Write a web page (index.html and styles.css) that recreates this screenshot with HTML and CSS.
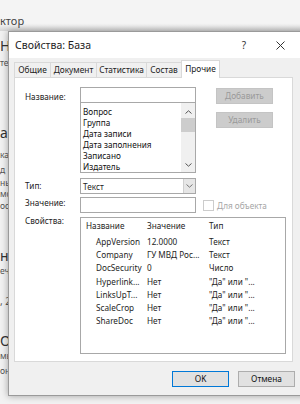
FILE: index.html
```html
<!DOCTYPE html>
<html lang="ru">
<head>
<meta charset="utf-8">
<link rel="stylesheet" href="styles.css">
</head>
<body>
<div class="app">
  <div class="app-top"><span class="app-title">ктор</span></div>
  <div class="app-lines">
    <div class="bl big g7">Н</div>
    <div class="bl sm g4">те</div>
    <div class="bl big g57">а</div>
    <div class="bl sm g9">ка</div>
    <div class="bl sm g5">д</div>
    <div class="bl sm g3">ны</div>
    <div class="bl sm g1">мс</div>
    <div class="bl sm g2">ос</div>
    <div class="bl big g37">ни</div>
    <div class="bl sm g2">еч</div>
    <div class="bl md g19">, 2</div>
    <div class="bl big g26">Оь</div>
    <div class="bl sm g2">мь</div>
    <div class="bl sm g5">он</div>
  </div>
</div>

<div class="dialog">
  <div class="titlebar">
    <span class="title">Свойства: База</span>
    <span class="help">?</span>
    <svg class="close" width="9" height="9" viewBox="0 0 9 9"><path d="M0.5 0.5L8.5 8.5M8.5 0.5L0.5 8.5" stroke="#333" stroke-width="1"/></svg>
  </div>
  <div class="dlg-body">
    <div class="tabs">
      <div class="tab t1">Общие</div>
      <div class="tab t2">Документ</div>
      <div class="tab t3">Статистика</div>
      <div class="tab t4">Состав</div>
      <div class="tab active">Прочие</div>
    </div>
    <div class="panel">
      <div class="form">
        <div class="label lbl-name">Название:</div>
        <div class="name-col">
          <div class="input"></div>
          <div class="listbox">
            <div class="items">
              <div>Вопрос</div>
              <div>Группа</div>
              <div>Дата записи</div>
              <div>Дата заполнения</div>
              <div>Записано</div>
              <div>Издатель</div>
            </div>
            <div class="vscroll">
              <svg class="arr" width="7" height="4" viewBox="0 0 7 4"><path d="M0.5 3.5L3.5 0.8L6.5 3.5" fill="none" stroke="#555" stroke-width="1"/></svg>
              <div class="thumb"></div>
              <div class="track"></div>
              <svg class="arr" width="7" height="4" viewBox="0 0 7 4"><path d="M0.5 0.5L3.5 3.2L6.5 0.5" fill="none" stroke="#555" stroke-width="1"/></svg>
            </div>
          </div>
        </div>
        <div class="btn-col">
          <div class="btn disabled">Добавить</div>
          <div class="btn disabled">Удалить</div>
        </div>

        <div class="label lbl-type">Тип:</div>
        <div class="combo">
          <span class="combo-text">Текст</span>
          <span class="combo-btn"><svg width="7" height="4" viewBox="0 0 7 4"><path d="M0.5 0.5L3.5 3.2L6.5 0.5" fill="none" stroke="#777" stroke-width="1"/></svg></span>
        </div>
        <div></div>

        <div class="label lbl-val">Значение:</div>
        <div class="input val-input"></div>
        <div class="check-wrap"><span class="checkbox"></span><span class="check-label">Для объекта</span></div>

        <div class="label lbl-props">Свойства:</div>
        <div class="props">
          <div class="prow head"><span class="c1">Название</span><span class="c2">Значение</span><span class="c3">Тип</span></div>
          <div class="prow"><span class="c1 in">AppVersion</span><span class="c2">12.0000</span><span class="c3">Текст</span></div>
          <div class="prow"><span class="c1 in">Company</span><span class="c2">ГУ МВД Рос...</span><span class="c3">Текст</span></div>
          <div class="prow"><span class="c1 in">DocSecurity</span><span class="c2">0</span><span class="c3">Число</span></div>
          <div class="prow"><span class="c1 in">Hyperlink...</span><span class="c2">Нет</span><span class="c3">"Да" или "...</span></div>
          <div class="prow"><span class="c1 in">LinksUpT...</span><span class="c2">Нет</span><span class="c3">"Да" или "...</span></div>
          <div class="prow"><span class="c1 in">ScaleCrop</span><span class="c2">Нет</span><span class="c3">"Да" или "...</span></div>
          <div class="prow"><span class="c1 in">ShareDoc</span><span class="c2">Нет</span><span class="c3">"Да" или "...</span></div>
        </div>
      </div>
    </div>
    <div class="footer">
      <div class="btn ok">OK</div>
      <div class="btn cancel">Отмена</div>
    </div>
  </div>
</div>
</body>
</html>
```

FILE: styles.css
```css
* { box-sizing: border-box; }
html, body {
  margin: 0;
  padding: 0;
  width: 300px;
  height: 404px;
  overflow: hidden;
}
body {
  background: #e4e4e4;
  font-family: "Noto Sans", "Open Sans", sans-serif;
  color: #1e1e1e;
  position: relative;
}

/* background application */
.app {
  width: 300px;
  height: 404px;
  background: #f2f2f2;
}
.app-top {
  height: 31px;
  background: linear-gradient(#f4f4f4 0, #f4f4f4 24px, #d6d6d6 31px);
  padding-top: 13px;
  line-height: 13px;
}
.app-title {
  font-size: 11px;
  color: #444;
}
.app-lines {
  display: flex;
  flex-direction: column;
}
.bl {
  color: #333;
  white-space: nowrap;
}
.bl.big { font-size: 14px; height: 16px; line-height: 16px; }
.bl.md { font-size: 10px; height: 12px; line-height: 12px; color: #555; }
.bl.sm { font-size: 8.5px; height: 10px; line-height: 10px; color: #555; }
.g1 { margin-top: 1px; }
.g2 { margin-top: 2px; }
.g3 { margin-top: 3px; }
.g4 { margin-top: 4px; }
.g5 { margin-top: 5px; }
.g7 { margin-top: 7px; }
.g9 { margin-top: 9px; }
.g19 { margin-top: 19px; }
.g26 { margin-top: 26px; }
.g37 { margin-top: 37px; }
.g57 { margin-top: 57px; }

/* dialog */
.dialog {
  position: absolute;
  left: 8px;
  top: 31px;
  width: 300px;
  height: 365px;
  background: #f0f0f0;
  border: 1px solid #9a9a9a;
  box-shadow: 0 0 7px rgba(0, 0, 0, 0.35);
}
.titlebar {
  height: 26px;
  background: #fff;
  display: flex;
  align-items: center;
  padding-left: 6px;
}
.title {
  font-size: 10.5px;
  color: #222;
  flex: 1;
}
.help {
  font-size: 10px;
  color: #333;
  margin-right: 30px;
}
.close {
  margin-right: 22px;
}
.dlg-body {
  padding: 2px 0 0 5px;
}

/* tabs */
.tabs {
  display: flex;
  align-items: flex-end;
  height: 17px;
  position: relative;
  z-index: 1;
}
.tab {
  height: 15px;
  font-size: 8.3px;
  line-height: 13px;
  border: 1px solid #d9d9d9;
  border-bottom: none;
  margin-right: -1px;
  background: #f0f0f0;
  text-align: center;
  color: #222;
}
.t1 { width: 37px; }
.t2 { width: 47px; }
.t3 { width: 51px; }
.t4 { width: 36px; }
.tab.active {
  width: 39px;
  height: 18px;
  line-height: 15px;
  background: #fff;
  margin-bottom: -1px;
}

.panel {
  width: 279px;
  height: 285px;
  background: #fff;
  border: 1px solid #d9d9d9;
  padding: 9px 0 0 10px;
}

.form {
  display: grid;
  grid-template-columns: 55px 116px 90px;
  font-size: 8.2px;
}
.label {
  color: #222;
  line-height: 11px;
}
.lbl-name { padding-top: 4px; }
.lbl-type { padding-top: 7px; }
.lbl-val { padding-top: 3px; }
.lbl-props { padding-top: 2px; }

.input {
  height: 16px;
  border: 1px solid #a8a8a8;
  background: #fff;
}
.listbox {
  height: 71px;
  margin-top: -1px;
  border: 1px solid #a8a8a8;
  display: flex;
}
.items {
  flex: 1;
  padding: 3px 0 0 2px;
  line-height: 11px;
  color: #111;
  white-space: nowrap;
  overflow: hidden;
}
.vscroll {
  width: 14px;
  background: #f0f0f0;
  display: flex;
  flex-direction: column;
  align-items: center;
  padding: 7px 0 5px;
}
.vscroll .arr { flex: none; }
.thumb {
  width: 14px;
  height: 14px;
  margin-top: 4px;
  background: #cdcdcd;
}
.track { flex: 1; }

.btn-col {
  padding-left: 20px;
  display: flex;
  flex-direction: column;
  gap: 8px;
  padding-top: 1px;
}
.btn {
  width: 57px;
  height: 16px;
  font-size: 8.3px;
  line-height: 14px;
  text-align: center;
  border: 1px solid #adadad;
  background: #e1e1e1;
  color: #111;
}
.btn.disabled {
  background: #cccccc;
  border-color: #c4c4c4;
  color: #9a9a9a;
}

.combo {
  margin-top: 5px;
  height: 16px;
  border: 1px solid #a8a8a8;
  display: flex;
  align-items: center;
  background: #fff;
}
.combo-text {
  flex: 1;
  padding-left: 2px;
}
.combo-btn {
  width: 12px;
  height: 14px;
  background: #e6e6e6;
  border-left: 1px solid #cfcfcf;
  display: flex;
  align-items: center;
  justify-content: center;
}

.val-input { margin-top: 3px; }
.check-wrap {
  margin-top: 3px;
  display: flex;
  align-items: center;
  padding-left: 7px;
  height: 16px;
}
.checkbox {
  width: 11px;
  height: 11px;
  border: 1px solid #cccccc;
  background: #fff;
  margin-right: 3px;
}
.check-label { color: #a6a6a6; }

.props {
  grid-column: 2 / 4;
  width: 206px;
  height: 137px;
  margin-top: 4px;
  border: 1px solid #a8a8a8;
  padding: 2px 0 0 5px;
}
.prow {
  display: flex;
  height: 13.2px;
  line-height: 13px;
  white-space: nowrap;
}
.prow.head { height: 15px; line-height: 12px; }
.c1 { width: 61px; }
.c1.in { padding-left: 10px; }
.c2 { width: 62px; }
.c3 { flex: 1; }

.footer {
  display: flex;
  padding: 9px 0 0 158px;
  gap: 9px;
}
.btn.ok {
  border-color: #0078d7;
}
```
